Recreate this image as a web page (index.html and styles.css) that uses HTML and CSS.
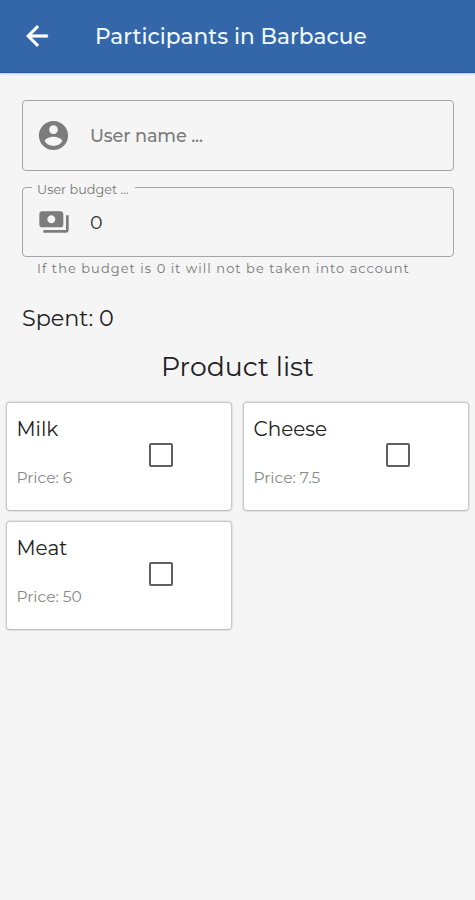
FILE: index.html
```html
<!DOCTYPE html>
<html lang="en">
<head>
<meta charset="utf-8">
<title>Participants in Barbacue</title>
<link rel="stylesheet" href="styles.css">
</head>
<body>
<header class="bar">
  <svg class="back" viewBox="0 0 24 24"><path d="M20 11H7.83l5.59-5.59L12 4l-8 8 8 8 1.41-1.41L7.83 13H20v-2z"/></svg>
  <h1 class="title">Participants in Barbacue</h1>
</header>
<main>
  <div class="form">
    <div class="field">
      <svg class="icon user" viewBox="0 0 24 24"><path d="M12 2C6.48 2 2 6.48 2 12s4.48 10 10 10 10-4.480 10-10S17.520 2 12 2zm0 3c1.660 0 3 1.340 3 3s-1.340 3-3 3-3-1.340-3-3 1.340-3 3-3zm0 14.200c-2.500 0-4.710-1.280-6-3.220.030-1.990 4-3.080 6-3.080 1.990 0 5.970 1.090 6 3.080-1.290 1.940-3.500 3.220-6 3.220z"/></svg>
      <span class="hint">User name ...</span>
    </div>
    <div class="field budget">
      <span class="label">User budget ...</span>
      <svg class="icon money" viewBox="0 0 24 24"><path d="M19 14V6c0-1.100-.9-2-2-2H3c-1.100 0-2 .9-2 2v8c0 1.100.9 2 2 2h14c1.100 0 2-.9 2-2zm-9-1c-1.660 0-3-1.340-3-3s1.340-3 3-3 3 1.340 3 3-1.340 3-3 3zm13-6v11c0 1.100-.9 2-2 2H4v-2h17V7h2z"/></svg>
      <span class="value">0</span>
    </div>
    <p class="helper">If the budget is 0 it will not be taken into account</p>
    <p class="spent">Spent: 0</p>
  </div>
  <h2 class="heading">Product list</h2>
  <div class="grid">
    <label class="card"><span class="info"><span class="name">Milk</span><span class="price">Price: 6</span></span><span class="check"></span></label>
    <label class="card"><span class="info"><span class="name">Cheese</span><span class="price">Price: 7.5</span></span><span class="check"></span></label>
    <label class="card"><span class="info"><span class="name">Meat</span><span class="price">Price: 50</span></span><span class="check"></span></label>
  </div>
</main>
</body>
</html>
```
FILE: styles.css
```css
* { box-sizing: border-box; }
body { margin: 0; min-height: 900px; background: #f5f5f5; color: #222; font-family: Montserrat, Inter, "Liberation Sans", sans-serif; }
h1, h2, p { margin: 0; font-weight: 400; }
.bar { height: 73px; padding-left: 21px; display: flex; align-items: center; background: #3367a9; border-bottom: 1px solid #2b5b9c; box-shadow: 0 1px 2px #b4c3d8; color: #f0f8ff; }
.back { width: 32px; height: 32px; margin-bottom: 1px; fill: #fff; stroke: #fff; stroke-width: .4; }
.title { margin-left: 42px; padding-top: 1px; font-size: 21.700px; line-height: 31px; font-weight: 500; white-space: nowrap; }
.form { padding: 27px 21px 0 22px; }
.field { height: 71px; display: flex; align-items: center; position: relative; border: 1.500px solid #a5a5a5; border-radius: 4px; }
.budget { margin-top: 16px; height: 70px; }
.icon { flex: none; fill: #7c7c7c; }
.user { width: 35px; height: 35px; margin-left: 13px; }
.money { width: 32px; height: 32px; margin: 0 1px 1px 15px; }
.hint { margin-left: 19px; font-size: 17.700px; font-weight: 500; letter-spacing: -.14px; color: #7c7c7c; }
.value { margin: 0 0 0 19px; font-size: 19px; color: #333; }
.label { position: absolute; left: 9px; top: -6px; width: 103px; padding-left: 5px; background: #f5f5f5; color: #777; font-size: 12.800px; line-height: 16px; white-space: nowrap; }
.helper { margin: 2px 0 0 15px; font-size: 13px; line-height: 18px; letter-spacing: 1.030px; color: #777; white-space: nowrap; }
.spent { margin-top: 27px; font-size: 22.300px; line-height: 28px; white-space: nowrap; }
.heading { margin-top: 18px; font-size: 26.700px; line-height: 34px; text-align: center; }
.grid { padding: 18px 5px 0 6px; display: grid; grid-template-columns: 226px 226px; column-gap: 11px; row-gap: 10px; }
.card { height: 109px; padding-left: 9.500px; display: flex; background: #fff; border: 1px solid #c9c9c9; border-bottom-color: #bdbdbd; border-radius: 4px; box-shadow: 0 0 1px 1px #e2e2e2; }
.info { width: 132.500px; padding-top: 13px; display: flex; flex-direction: column; gap: 26px; white-space: nowrap; }
.name { font-size: 20px; line-height: 26px; }
.price { font-size: 15.500px; line-height: 20px; color: #888; }
.check { width: 24px; height: 24px; margin-top: 40px; border: 2px solid #606060; border-radius: 2px; }
```
